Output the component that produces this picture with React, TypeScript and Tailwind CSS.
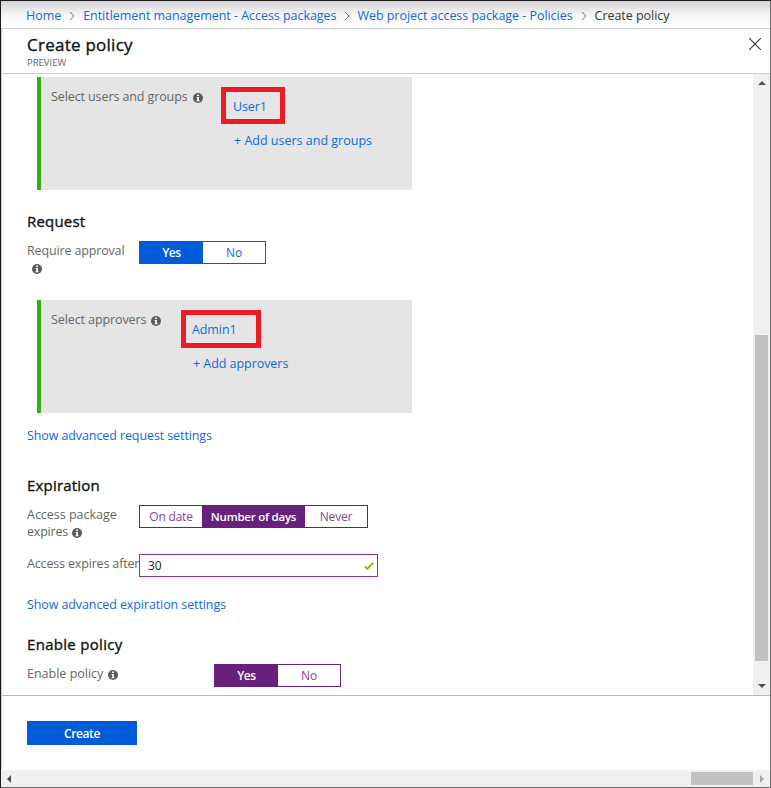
import { ReactNode } from "react";

function Info({ className = "" }: { className?: string }) {
  return (
    <svg viewBox="0 0 10 10" className={`h-[10px] w-[10px] shrink-0 ${className}`}>
      <circle cx="5" cy="5" r="5" fill="#5c5c5c" />
      <path d="M4.1 1.6h1.8v1.5H4.1zM3.6 4h2.3v3.3h.7v1H3.5v-1h.7V5h-.6z" fill="#fff" />
    </svg>
  );
}

function Chevron({ className = "" }: { className?: string }) {
  return (
    <svg viewBox="0 0 6 10" className={`h-[10px] w-[6px] shrink-0 ${className}`}>
      <path d="M1 1l4 4-4 4" fill="none" stroke="#777" strokeWidth="1" />
    </svg>
  );
}

function Link({ children, className = "" }: { children: ReactNode; className?: string }) {
  return (
    <a className={`block whitespace-nowrap text-[#1068df] ${className}`} href="#">
      {children}
    </a>
  );
}

function Heading({ children, className = "" }: { children: ReactNode; className?: string }) {
  return (
    <h2 className={`h-5 shrink-0 text-[15px] leading-5 tracking-[0.2px] whitespace-nowrap text-[#111] [-webkit-text-stroke:0.35px_#111] ${className}`}>
      {children}
    </h2>
  );
}

export default function App() {
  return (
    <div className="flex h-[788px] w-[771px] flex-col overflow-hidden border border-t-[#1d191c] border-r-[#6b6b6b] border-b-[#6b6b6b] border-l-[#1d191c] bg-white font-['Open_Sans','Noto_Sans',sans-serif] text-[12.5px] leading-[18px] tracking-[-0.1px] text-[#666]">
      <nav className="flex h-[27px] shrink-0 items-center bg-linear-to-b from-[#d6d4d6] via-[#f5f5f5] via-50% to-white pt-[2px] pl-[25px] tracking-[-0.04px]">
        <Link>Home</Link>
        <Chevron className="mx-2" />
        <Link>Entitlement management - Access packages</Link>
        <Chevron className="mx-[7.5px]" />
        <Link>Web project access package - Policies</Link>
        <Chevron className="mx-2" />
        <span className="whitespace-nowrap text-[#333]">Create policy</span>
      </nav>

      <div className="flex h-[742px] shrink-0 flex-col border-t border-l border-[#cfcfcf]">
        <header className="flex h-[45px] shrink-0 justify-between border-b border-[#cfcfcf] pl-[25px]">
          <div className="pt-[5px]">
            <h1 className="text-[17px] leading-[22px] tracking-[0.25px] whitespace-nowrap text-[#111] [-webkit-text-stroke:0.35px_#111]">Create policy</h1>
            <p className="text-[9.5px] leading-[13px] tracking-normal">PREVIEW</p>
          </div>
          <svg viewBox="0 0 12 12" className="mt-[9px] mr-[9px] h-3 w-3">
            <path d="M0 0l12 12M12 0L0 12" stroke="#333" strokeWidth="1.1" />
          </svg>
        </header>

        <div className="flex h-[621px] shrink-0">
          <main className="flex min-w-0 flex-1 flex-col overflow-hidden pt-[3px] pl-[25px]">
            <section className="ml-[10px] flex h-[113px] w-[375px] shrink-0 border-l-4 border-[#2fb30a] bg-[#e5e5e5]">
              <div className="mt-[11px] flex h-[18px] w-[180px] items-center pl-[10px]">
                <span className="whitespace-nowrap">Select users and groups</span>
                <Info className="mt-[2px] ml-[5px]" />
              </div>
              <div className="pt-[10px]">
                <div className="flex h-[37px] w-16 items-center border-5 border-[#ed1c24] pt-[2px] pl-[7px]">
                  <Link>User1</Link>
                </div>
                <Link className="mt-[8px] pl-[13px] tracking-normal">+ Add users and groups</Link>
              </div>
            </section>

            <Heading className="mt-[21px]">Request</Heading>
            <div className="mt-[11px] flex h-[37px] shrink-0">
              <div className="w-[112px]">
                <div className="tracking-[-0.15px] whitespace-nowrap">Require approval</div>
                <Info className="mt-[4px] ml-[5px]" />
              </div>
              <div className="-mt-px grid h-[23px] w-[127px] grid-cols-[63px_1fr] border border-[#015cda] text-center text-[12px] leading-[22px]">
                <span className="bg-[#015cda] font-semibold tracking-[-0.4px] text-white">Yes</span>
                <span className="text-[#1068df]">No</span>
              </div>
            </div>

            <section className="mt-[21px] ml-[10px] flex h-[113px] w-[375px] shrink-0 border-l-4 border-[#2fb30a] bg-[#e5e5e5]">
              <div className="mt-[11px] flex h-[18px] w-[140px] items-center pl-[10px]">
                <span className="whitespace-nowrap">Select approvers</span>
                <Info className="mt-[2px] ml-[5px]" />
              </div>
              <div className="pt-[10px]">
                <div className="flex h-[38px] w-20 items-center border-5 border-[#ed1c24] pt-[2px] pl-[6px]">
                  <Link>Admin1</Link>
                </div>
                <Link className="mt-[7px] pl-[12px] tracking-[-0.05px]">+ Add approvers</Link>
              </div>
            </section>
            <Link className="mt-[14px]">Show advanced request settings</Link>

            <Heading className="mt-[30px]">Expiration</Heading>
            <div className="mt-[11px] flex h-[48px] shrink-0">
              <div className="w-[112px] leading-[17px]">
                <div className="tracking-[-0.02px] whitespace-nowrap">Access package</div>
                <div className="flex items-center tracking-[-0.2px]">
                  expires
                  <Info className="mt-[3px] ml-[4px]" />
                </div>
              </div>
              <div className="-mt-px grid h-[23px] w-[229px] grid-cols-[62px_103px_1fr] border border-[#68217a] text-center text-[12px] leading-[22px] whitespace-nowrap text-[#804998]">
                <span className="tracking-[-0.2px]">On date</span>
                <span className="bg-[#68217a] text-[11.5px] font-semibold tracking-[-0.25px] text-white">Number of days</span>
                <span className="tracking-[-0.2px]">Never</span>
              </div>
            </div>
            <div className="flex h-[23px] shrink-0">
              <label className="w-[112px] pt-px tracking-[-0.16px] whitespace-nowrap">Access expires after</label>
              <div className="flex w-[239px] items-center justify-between border border-[#8b2fa3] pr-[3px] pl-2 text-[12px] text-[#222]">
                30
                <svg viewBox="0 0 10 8" className="h-2 w-[10px]">
                  <path d="M.7 4.3l2.7 2.6L9.3.7" fill="none" stroke="#7fba00" strokeWidth="1.8" />
                </svg>
              </div>
            </div>
            <Link className="mt-[19px]">Show advanced expiration settings</Link>

            <Heading className="mt-[20px] tracking-[0.3px]">Enable policy</Heading>
            <div className="mt-[10px] flex shrink-0">
              <div className="flex h-[18px] w-[187px] items-center pt-px tracking-normal">
                Enable policy
                <Info className="mt-[3px] ml-[5px]" />
              </div>
              <div className="grid h-[23px] w-[127px] grid-cols-[63px_1fr] border border-[#68217a] text-center text-[12px] leading-[22px]">
                <span className="bg-[#68217a] font-semibold tracking-[-0.4px] text-white">Yes</span>
                <span className="text-[#804998]">No</span>
              </div>
            </div>
          </main>
          <aside className="flex w-[17px] flex-col items-center bg-[#f0f0f0]">
            <svg viewBox="0 0 8 4" className="mt-[7px] h-1 w-2">
              <path d="M4 0l4 4H0z" fill="#505050" />
            </svg>
            <div className="mt-[250px] h-[326px] w-[13px] bg-[#c1c1c1]" />
            <svg viewBox="0 0 8 4" className="mt-[23px] h-1 w-2">
              <path d="M0 0h8L4 4z" fill="#505050" />
            </svg>
          </aside>
        </div>

        <footer className="flex-1 border-t border-[#b9b9b9] pt-[25px] pl-[25px]">
          <button className="block h-6 w-[110px] bg-[#015cda] pt-px text-[12px] leading-6 font-semibold tracking-[-0.4px] text-white">Create</button>
        </footer>
      </div>

      <div className="flex h-[17px] shrink-0 items-center bg-[#f0f0f0]">
        <svg viewBox="0 0 4 8" className="ml-[6px] h-2 w-1">
          <path d="M4 0v8L0 4z" fill="#505050" />
        </svg>
        <div className="ml-[680px] h-[13px] w-[62px] bg-[#c1c1c1]" />
        <svg viewBox="0 0 4 8" className="ml-[7px] h-2 w-1">
          <path d="M0 0v8l4-4z" fill="#a3a3a3" />
        </svg>
      </div>
    </div>
  );
}
